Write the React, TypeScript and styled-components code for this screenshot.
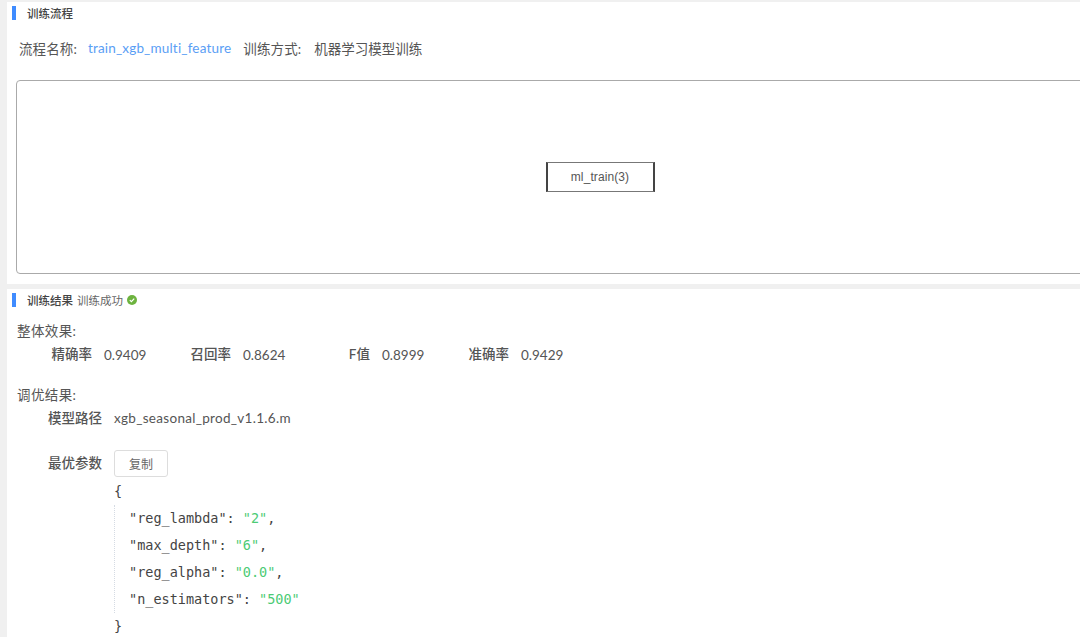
import React from "react";
import styled, { createGlobalStyle } from "styled-components";

const Global = createGlobalStyle`
  html, body { margin: 0; padding: 0; background: #f0f0f0; overflow: hidden; }
  body { width: 1080px; height: 637px; font-family: "Lato", "Noto Sans CJK SC", sans-serif; color: #555; }
`;
const Page = styled.div`
  height: 637px; padding: 2px 0 0 7px; box-sizing: border-box; display: flex; flex-direction: column; gap: 5px; overflow: hidden;
`;
const Panel = styled.section<{ $h?: number }>`
  background: #fff; flex: ${p => (p.$h ? `0 0 ${p.$h}px` : "1 1 auto")}; padding: 0 0 0 5px; min-width: 0;
`;
const Head = styled.header`
  display: flex; align-items: center; height: 14px; margin-top: 4px; font-size: 11.5px; color: #555;
`;
const Bar = styled.i`
  width: 4px; height: 14px; background: #3f8cff; margin-right: 11px; flex: none;
`;
const Title = styled.span`
  font-weight: 500; color: #444; margin-right: 4px;
`;
const Status = styled.span`
  color: #666; margin-right: 4px;
`;
const Info = styled.div`
  display: flex; height: 18px; align-items: center; margin: 19px 0 0 7px; font-size: 13.5px; color: #555;
`;
const Key = styled.span<{ $gap: number }>`
  margin-right: ${p => p.$gap}px; letter-spacing: .1px;
`;
const Link = styled.span`
  color: #5a9ef5; margin-right: 12px; letter-spacing: .18px;
`;
const Canvas = styled.div`
  display: flex; align-items: center; justify-content: center; box-sizing: border-box;
  width: 1167px; height: 194px; margin: 23px 0 0 4px; border: 1px solid #aaa; border-radius: 4px; padding: 0 0 1px 1px;
`;
const Node = styled.div`
  box-sizing: border-box; width: 109px; height: 30px; display: flex; align-items: center; justify-content: center;
  border: solid #777; border-width: 1px 2px; border-left-color: #444; border-right-color: #444;
  font-size: 12px; letter-spacing: .1px; color: #555; font-family: "Liberation Sans", sans-serif;
`;
const Section = styled.div<{ $mt: number }>`
  margin: ${p => p.$mt}px 0 0 5px; font-size: 13.5px; letter-spacing: .4px; color: #555; height: 18px; line-height: 18px;
`;
const Metrics = styled.div`
  display: grid; grid-template-columns: repeat(4, 139px); height: 18px; margin-top: 4px; font-size: 13.5px; line-height: 18px; color: #555;
`;
const Metric = styled.div`
  display: grid; grid-template-columns: 80px 1fr; column-gap: 12px; align-items: start;
`;
const MetricName = styled.span`
  font-weight: 500; text-align: right; height: 18px; margin-top: 1px;
`;
const MetricValue = styled.span`
  height: 18px; margin-top: 2px;
`;
const Row = styled.div<{ $mt: number; $h: number }>`
  display: grid; grid-template-columns: 90px 1fr; grid-template-rows: ${p => p.$h}px; column-gap: 12px;
  margin-top: ${p => p.$mt}px; font-size: 13.5px; color: #555; align-items: center;
`;
const Label = styled.span<{ $lift: number }>`
  font-weight: 500; text-align: right; color: #555; margin-bottom: ${p => p.$lift}px;
`;
const PathText = styled.span`
  letter-spacing: .3px;
`;
const CopyBtn = styled.button`
  width: 54px; height: 27px; border: 1px solid #ddd; border-radius: 3px; background: #fff; color: #666;
  font: 12px "Lato", "Noto Sans CJK SC", sans-serif; padding: 0; display: block;
`;
const Json = styled.pre`
  margin: 1px 0 0 102px; font: 13.5px/27px "DejaVu Sans Mono", monospace; color: #444;
`;
const Indent = styled.div`
  border-left: 1px dotted #d5dbe3; padding-left: 14px;
`;
const Str = styled.span`
  color: #4ccb75;
`;

export default function App() {
  const params: [string, string, boolean][] = [
    ["reg_lambda", "2", true], ["max_depth", "6", true], ["reg_alpha", "0.0", true], ["n_estimators", "500", false],
  ];
  const metrics = [["精确率", "0.9409"], ["召回率", "0.8624"], ["F值", "0.8999"], ["准确率", "0.9429"]];
  return (
    <Page>
      <Global />
      <Panel $h={282}>
        <Head><Bar /><Title>训练流程</Title></Head>
        <Info>
          <Key $gap={11}>流程名称:</Key><Link>train_xgb_multi_feature</Link>
          <Key $gap={13}>训练方式:</Key><span>机器学习模型训练</span>
        </Info>
        <Canvas><Node>ml_train(3)</Node></Canvas>
      </Panel>
      <Panel>
        <Head>
          <Bar /><Title>训练结果</Title><Status>训练成功</Status>
          <svg width="10" height="10" viewBox="0 0 10 10"><circle cx="5" cy="5" r="5" fill="#6db33f" /><path d="M2.8 5.1 4.4 6.6 7.2 3.6" fill="none" stroke="#fff" strokeWidth="1.2" /></svg>
        </Head>
        <Section $mt={15}>整体效果:</Section>
        <Metrics>
          {metrics.map(([k, v]) => (
            <Metric key={k}><MetricName>{k}</MetricName><MetricValue>{v}</MetricValue></Metric>
          ))}
        </Metrics>
        <Section $mt={24}>调优结果:</Section>
        <Row $mt={4} $h={20}><Label $lift={2}>模型路径</Label><PathText>xgb_seasonal_prod_v1.1.6.m</PathText></Row>
        <Row $mt={22} $h={27}><Label $lift={4}>最优参数</Label><CopyBtn>复制</CopyBtn></Row>
        <Json>
          {"{"}
          <Indent>
            {params.map(([k, v, comma]) => (
              <div key={k}>"{k}": <Str>"{v}"</Str>{comma ? "," : ""}</div>
            ))}
          </Indent>
          {"}"}
        </Json>
      </Panel>
    </Page>
  );
}
